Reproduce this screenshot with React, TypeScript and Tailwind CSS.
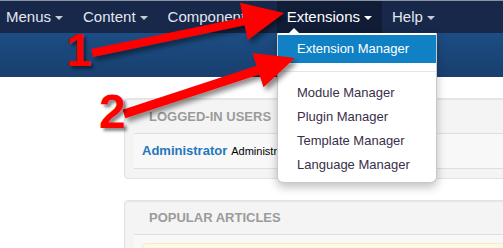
import React from "react";

type Pt = [number, number];

const arrowPoints = (tail: Pt, tip: Pt, sw: number, hl: number, hw: number) => {
  const dx = tip[0] - tail[0];
  const dy = tip[1] - tail[1];
  const len = Math.hypot(dx, dy);
  const ux = dx / len;
  const uy = dy / len;
  const nx = -uy;
  const ny = ux;
  const bx = tip[0] - ux * hl;
  const by = tip[1] - uy * hl;
  const pts: Pt[] = [
    [tail[0] + (nx * sw) / 2, tail[1] + (ny * sw) / 2],
    [bx + (nx * sw) / 2, by + (ny * sw) / 2],
    [bx + (nx * hw) / 2, by + (ny * hw) / 2],
    tip,
    [bx - (nx * hw) / 2, by - (ny * hw) / 2],
    [bx - (nx * sw) / 2, by - (ny * sw) / 2],
    [tail[0] - (nx * sw) / 2, tail[1] - (ny * sw) / 2],
  ];
  return pts.map((p) => p.join(",")).join(" ");
};

const Caret = ({ white }: { white?: boolean }) => (
  <span
    className={`ml-[4px] inline-block w-0 h-0 border-l-[4px] border-r-[4px] border-t-[4px] border-l-transparent border-r-transparent ${
      white ? "border-t-white" : "border-t-[#c8ccd4]"
    } translate-y-[1px]`}
  />
);

const NavItem = ({ label, active }: { label: string; active?: boolean }) => (
  <div
    className={`h-full flex items-center px-[10px] ${
      active ? "bg-[#111d36] text-white" : "text-[#e4e7ee]"
    }`}
  >
    <span>{label}</span>
    <Caret white={active} />
  </div>
);

const App: React.FC = () => {
  const menu = ["Module Manager", "Plugin Manager", "Template Manager", "Language Manager"];

  return (
    <div
      className="relative w-[503px] h-[248px] overflow-hidden bg-white"
      style={{ fontFamily: '"Liberation Sans", Arial, sans-serif' }}
    >
      {/* top navbar */}
      <div className="h-[33px] bg-[#17284a] border-t border-[#8b93a3] flex items-stretch text-[15px] -ml-[4px]">
        <NavItem label="Menus" />
        <NavItem label="Content" />
        <NavItem label="Components" />
        <div className="w-[2px]" />
        <NavItem label="Extensions" active />
        <NavItem label="Help" />
      </div>

      {/* subhead */}
      <div className="h-[44px] bg-gradient-to-b from-[#1c4d84] to-[#183f6e]" />

      {/* content */}
      <div className="flex flex-col gap-[21px] pl-[124px] pt-[21px]">
        <div className="w-[420px] bg-[#f4f4f4] border border-[#e2e2e2] rounded-[4px] px-[9px] pb-[9px] shadow-[inset_0_1px_2px_rgba(0,0,0,0.06)]">
          <div className="pt-[10px] pb-[8px] pl-[15px] text-[13px] font-bold text-[#9b9b9b] leading-[16px]">
            LOGGED-IN USERS
          </div>
          <div className="bg-[#f8f8f8] border-t border-b border-[#dedede] h-[36px] flex items-center pl-[8px] gap-[4px]">
            <span className="text-[13px] font-bold text-[#2576bd]">Administrator</span>
            <span className="text-[11px] text-black">Administrator</span>
          </div>
        </div>

        <div className="w-[420px] bg-[#f4f4f4] border border-[#e2e2e2] rounded-[4px] px-[9px] pb-[9px] shadow-[inset_0_1px_2px_rgba(0,0,0,0.06)]">
          <div className="pt-[9px] pb-[8px] pl-[15px] text-[13px] font-bold text-[#9b9b9b] leading-[16px]">
            POPULAR ARTICLES
          </div>
          <div className="bg-[#f8f8f8] border-t border-[#dedede] pt-[8px] pl-[8px]">
            <div className="h-[30px] bg-[#fcf8e3] border border-[#f5e9c8] rounded-[4px]" />
          </div>
        </div>
      </div>

      {/* dropdown */}
      <div className="absolute left-[277px] top-[33px] w-[160px] bg-white border border-[#c9c9c9] border-t-0 rounded-b-[6px] shadow-[0_4px_10px_rgba(0,0,0,0.25)] pt-[2px] pb-[5px] text-[13px]">
        <div className="absolute -top-[5px] left-[11px] w-0 h-0 border-l-[5px] border-r-[5px] border-b-[5px] border-l-transparent border-r-transparent border-b-white" />
        <div className="h-[28px] bg-[#1181c5] text-white flex items-center pl-[19px]">Extension Manager</div>
        <div className="mt-[8px] mb-[9px] h-px bg-[#e5e5e5]" />
        {menu.map((m) => (
          <div key={m} className="h-[24px] flex items-center pl-[19px] text-[#3a2f4a]">
            {m}
          </div>
        ))}
      </div>

      {/* annotations */}
      <svg className="absolute inset-0" width="503" height="248">
        <defs>
          <filter id="sh" x="-20%" y="-20%" width="140%" height="160%">
            <feDropShadow dx="3" dy="4" stdDeviation="2.5" floodColor="#000" floodOpacity="0.45" />
          </filter>
        </defs>
        <polygon filter="url(#sh)" fill="#ff0000" points={arrowPoints([92, 53], [284, 13], 8, 41, 38)} />
        <polygon filter="url(#sh)" fill="#ff0000" points={arrowPoints([124, 114], [295, 58], 9, 39, 36)} />
      </svg>
      <div
        className="absolute left-[66px] top-[27px] text-[46px] font-bold leading-none text-[#ff0000]"
        style={{ textShadow: "3px 3px 3px rgba(0,0,0,0.45)" }}
      >
        1
      </div>
      <div
        className="absolute left-[99px] top-[88px] text-[48px] font-bold leading-none text-[#ff0000]"
        style={{ textShadow: "3px 3px 3px rgba(0,0,0,0.45)" }}
      >
        2
      </div>
    </div>
  );
};

export default App;
